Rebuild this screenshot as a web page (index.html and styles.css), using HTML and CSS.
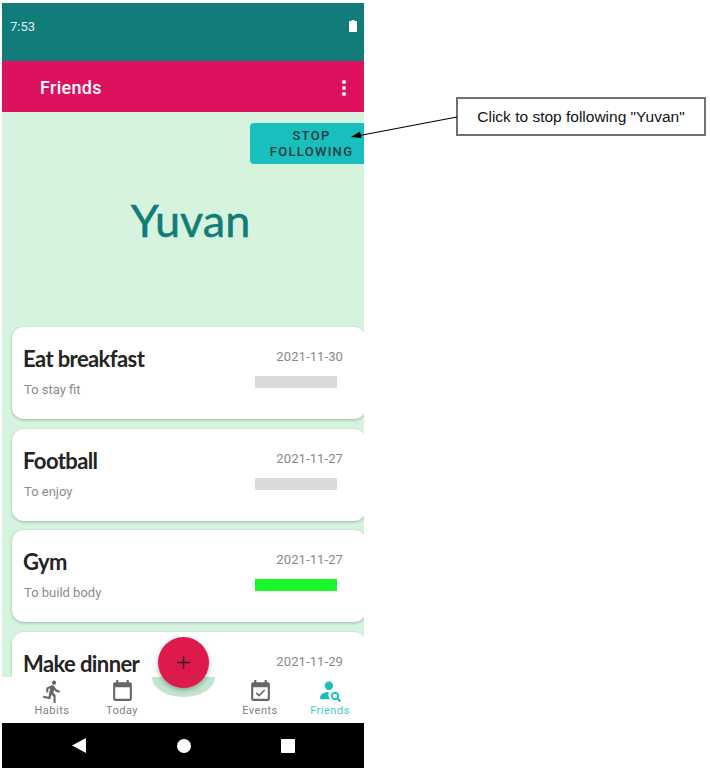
FILE: index.html
```html
<!DOCTYPE html>
<html lang="en">
<head>
<meta charset="utf-8">
<title>Friends</title>
<link rel="stylesheet" href="styles.css">
</head>
<body>
<div class="phone">
  <div class="status">
    <span class="time">7:53</span>
    <svg class="battery" width="8" height="12" viewBox="0 0 8 12"><path d="M2.500 0h3v1H7a1 1 0 0 1 1 1v9a1 1 0 0 1-1 1H1a1 1 0 0 1-1-1V2a1 1 0 0 1 1-1h1.500z" fill="#fff"/></svg>
  </div>
  <div class="appbar">
    <span class="appbar-title">Friends</span>
    <svg class="more" width="4" height="16" viewBox="0 0 4 16"><circle cx="2" cy="2" r="2" fill="#fff"/><circle cx="2" cy="8" r="2" fill="#fff"/><circle cx="2" cy="14" r="2" fill="#fff"/></svg>
  </div>
  <main class="content">
    <div class="stop-row"><button class="stop">STOP<br>FOLLOWING</button></div>
    <h1 class="name">Yuvan</h1>
    <div class="cards">
      <article class="card">
        <div class="card-left"><h2 class="card-title">Eat breakfast</h2><p class="card-sub">To stay fit</p></div>
        <div class="card-right"><span class="date">2021-11-30</span><span class="bar"></span></div>
      </article>
      <article class="card">
        <div class="card-left"><h2 class="card-title">Football</h2><p class="card-sub">To enjoy</p></div>
        <div class="card-right"><span class="date">2021-11-27</span><span class="bar"></span></div>
      </article>
      <article class="card">
        <div class="card-left"><h2 class="card-title">Gym</h2><p class="card-sub">To build body</p></div>
        <div class="card-right"><span class="date">2021-11-27</span><span class="bar bar-done"></span></div>
      </article>
      <article class="card">
        <div class="card-left"><h2 class="card-title">Make dinner</h2></div>
        <div class="card-right"><span class="date">2021-11-29</span></div>
      </article>
    </div>
  </main>
  <nav class="nav">
    <div class="nav-side">
      <a class="nav-item">
        <svg width="25" height="25" viewBox="0 0 24 24" fill="#666"><path d="M13.490 5.480c1.100 0 2-.9 2-2s-.9-2-2-2-2 .9-2 2 .9 2 2 2zm-3.600 13.900l1-4.400 2.100 2v6h2v-7.500l-2.100-2 .6-3c1.300 1.500 3.300 2.500 5.500 2.500v-2c-1.900 0-3.500-1-4.300-2.400l-1-1.600c-.4-.6-1-1-1.700-1-.3 0-.5.100-.8.100l-5.200 2.200v4.700h2v-3.400l1.800-.7-1.600 8.100-4.900-1-.4 2 7 1.400z"/></svg>
        <span>Habits</span>
      </a>
      <a class="nav-item">
        <svg width="25" height="25" viewBox="0 0 24 24" fill="#666"><path d="M19 3h-1V1h-2v2H8V1H6v2H5c-1.110 0-2 .9-2 2v14c0 1.100.89 2 2 2h14c1.100 0 2-.9 2-2V5c0-1.100-.9-2-2-2zm0 16H5V8h14v11z"/></svg>
        <span>Today</span>
      </a>
    </div>
    <div class="nav-side">
      <a class="nav-item">
        <svg width="25" height="25" viewBox="0 0 24 24" fill="#666"><path d="M16.530 11.060l-1.060-1.060-4.880 4.880-2.120-2.120-1.060 1.060 3.180 3.180 5.940-5.940zM19 3h-1V1h-2v2H8V1H6v2H5c-1.110 0-2 .9-2 2v14c0 1.100.89 2 2 2h14c1.100 0 2-.9 2-2V5c0-1.100-.9-2-2-2zm0 16H5V8h14v11z"/></svg>
        <span>Events</span>
      </a>
      <a class="nav-item nav-active">
        <svg width="25" height="25" viewBox="0 0 24 24" fill="#19bfbd"><circle cx="10.500" cy="6.500" r="4"/><path d="M10.300 12.500C6.500 12.500 2.500 14.300 2 17.500c-.2 1.300.1 2 1 2h8.800a7 7 0 0 1-1.500-7z"/><path fill-rule="evenodd" d="M19.800 18.300a4 4 0 1 0-1.400 1.400l2.500 2.500 1.400-1.400-2.500-2.500zM16.300 18.500a2.200 2.200 0 1 1 0-4.400 2.200 2.200 0 0 1 0 4.400z"/></svg>
        <span>Friends</span>
      </a>
    </div>
    <div class="fab-arc"></div>
    <button class="fab"><svg width="13" height="13" viewBox="0 0 13 13"><path d="M6.500 0v13M0 6.500h13" stroke="#3a1a28" stroke-width="1.500"/></svg></button>
  </nav>
  <div class="sysbar">
    <svg width="14" height="15" viewBox="0 0 14 15"><path d="M14 0v15L0 7.500z" fill="#fff"/></svg>
    <svg width="14" height="14" viewBox="0 0 14 14"><circle cx="7" cy="7" r="7" fill="#fff"/></svg>
    <svg width="14" height="14" viewBox="0 0 14 14"><rect width="14" height="14" rx="1" fill="#fff"/></svg>
  </div>
</div>
<div class="callout">Click to stop following "Yuvan"</div>
<svg class="arrow" width="110" height="30" viewBox="0 0 110 30"><path d="M106 1L6 20" stroke="#000" stroke-width="1.200" fill="none"/><path d="M0 21l9-5.500 1.500 6.500z" fill="#000"/></svg>
</body>
</html>
```
FILE: styles.css
```css
* { box-sizing: border-box; }
html, body { margin: 0; padding: 0; background: #fff; }
body { width: 710px; height: 774px; overflow: hidden; font-family: Roboto, sans-serif; position: relative; }
.phone { width: 362px; height: 765px; margin: 3px 0 0 2px; display: flex; flex-direction: column; overflow: hidden; }
.status { height: 58px; flex: none; background: #127c7a; display: flex; align-items: center; justify-content: space-between; padding: 0 7px 12px 8px; }
.time { color: #dcecea; font-size: 13px; }
.battery { display: block; }
.appbar { height: 51px; flex: none; background: #dc125f; display: flex; align-items: center; justify-content: space-between; padding: 2px 18px 0 38px; }
.appbar-title { color: #fff; font-size: 18px; font-weight: 500; letter-spacing: 0.300px; }
.content { flex: 1; min-height: 0; background: #d5f3dd; overflow: hidden; }
.stop-row { display: flex; justify-content: flex-end; padding-top: 11px; }
.stop { width: 114px; height: 41px; border: 0; border-radius: 4px 0 0 4px; background: #19bfbd; color: #1e3a42; font: 500 13px/16px Roboto, sans-serif; letter-spacing: 1.300px; padding: 0 0 0 9px; text-align: center; }
.name { margin: 28px 0 0 15px; height: 135px; text-align: center; font: 400 45px/56px Lato, sans-serif; color: #127c7a; -webkit-text-stroke: 0.5px #127c7a; }
.cards { padding-left: 10px; margin-right: -2px; display: flex; flex-direction: column; gap: 9.500px; }
.card { height: 92px; flex: none; background: #fff; border-radius: 12px; box-shadow: 0 1px 3px rgba(0,0,0,.25); display: flex; justify-content: space-between; padding: 0 23px 0 11px; }
.card-title { margin: 18px 0 0; font: 700 22px/28px Lato, sans-serif; color: #242424; letter-spacing: -0.600px; }
.card-sub { margin: 8px 0 0 1px; font-size: 13px; line-height: 18px; color: #8c8c8c; }
.card-right { width: 88px; display: flex; flex-direction: column; align-items: flex-end; }
.date { margin-top: 22px; font-size: 13px; line-height: 16px; color: #888; letter-spacing: 0.100px; white-space: nowrap; }
.bar { display: block; width: 82px; height: 12px; margin: 11px 6px 0 0; background: #d9d9d9; }
.bar-done { background: #19f72c; }
.nav { height: 46px; flex: none; background: #fff; position: relative; display: flex; justify-content: space-between; padding-left: 15px; }
.nav-side { display: flex; }
.nav-side + .nav-side { margin-right: -1px; }
.nav-item { width: 70px; display: flex; flex-direction: column; align-items: center; color: #808080; font-size: 11px; line-height: 13px; letter-spacing: 0.500px; padding-top: 2px; }
.nav-item svg { display: block; }
.nav-active { color: #3fcbc9; }
.fab { position: absolute; left: 156px; top: -40px; width: 51px; height: 51px; border: 0; border-radius: 50%; background: #dc1a4c; padding: 0; display: flex; align-items: center; justify-content: center; box-shadow: 0 2px 5px rgba(0,0,0,.3); }
.fab-arc { position: absolute; left: 150px; top: 0; width: 63px; height: 20px; background: #c3e4d0; border-radius: 0 0 32px 32px / 0 0 20px 20px; }
.sysbar { height: 45px; flex: none; background: #000; display: flex; align-items: center; justify-content: space-between; padding: 0 69px 0 70px; }
.sysbar svg { display: block; }
.callout { position: absolute; left: 456px; top: 97px; width: 250px; height: 39px; border: 2px solid #707070; background: #fff; display: flex; align-items: center; justify-content: center; font: 15.500px "Liberation Sans", sans-serif; color: #111; }
.arrow { position: absolute; left: 351px; top: 116px; }
```
